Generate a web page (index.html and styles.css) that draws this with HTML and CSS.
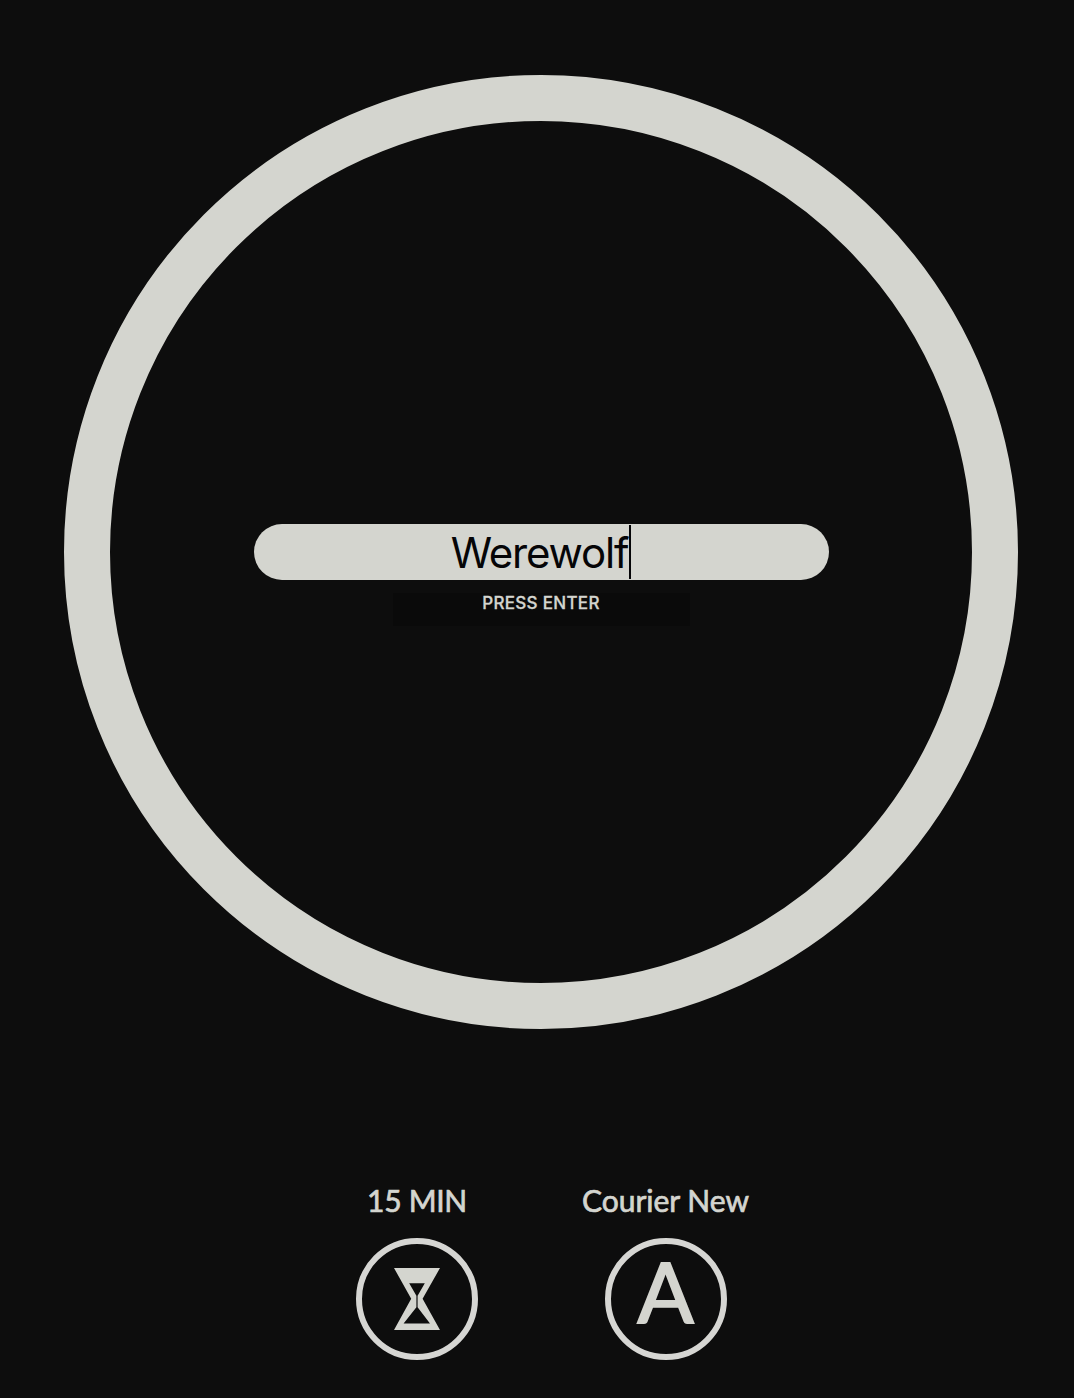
FILE: index.html
```html
<!DOCTYPE html>
<html lang="en">
<head>
<meta charset="utf-8">
<title>Werewolf</title>
<link rel="stylesheet" href="styles.css">
</head>
<body>
<main class="screen">
  <section class="ring">
    <div class="field"><span class="value">Werewolf</span><span class="caret"></span></div>
    <div class="hint"><span class="hint-text">PRESS ENTER</span></div>
  </section>
  <nav class="options">
    <div class="option">
      <span class="label label-time">15 MIN</span>
      <div class="button">
        <svg class="hourglass" width="46" height="62" viewBox="0 0 46 62" aria-hidden="true">
          <path fill="currentColor" fill-rule="evenodd" d="M0 0H46L28.6 30.8L46 62H0L17.2 30.8ZM15.2 15.3L22.4 27.8V39.2L9.6 55.6H36L23.6 39.2V27.8L30.8 15.3Z"/>
        </svg>
      </div>
    </div>
    <div class="option">
      <span class="label label-font">Courier New</span>
      <div class="button"><span class="letter">A</span></div>
    </div>
  </nav>
</main>
</body>
</html>
```

FILE: styles.css
```css
* { box-sizing: border-box; }
body {
  margin: 0;
  background: #0d0d0d;
  color: #d4d5cf;
}
.screen {
  width: 1074px;
  height: 1398px;
  padding: 75px 0 0 64px;
  overflow: hidden;
}
.ring {
  width: 954px;
  height: 954px;
  border: 46.5px solid #d4d5cf;
  border-radius: 50%;
  padding-top: 402.5px;
  display: flex;
  flex-direction: column;
  align-items: center;
}
.field {
  width: 575px;
  height: 56px;
  border-radius: 28px;
  background: #d4d5cf;
  color: #050507;
  display: flex;
  justify-content: center;
  align-items: center;
  font: 400 42px/56px Inter, sans-serif;
}
.value {
  padding-top: 2px;
  letter-spacing: -1.2px;
}
.caret {
  width: 2px;
  height: 54px;
  margin-left: 1px;
  background: #050507;
}
.hint {
  width: 297px;
  height: 33px;
  margin-top: 13px;
  background: #0a0a0a;
  text-align: center;
  font: 500 17px/21px Inter, sans-serif;
  letter-spacing: 0.3px;
  -webkit-text-stroke: 0.3px currentColor;
}
.options {
  display: flex;
  width: 498px;
  margin: 153px 0 0 228px;
}
.option {
  width: 249px;
  display: flex;
  flex-direction: column;
  align-items: center;
}
.label {
  font: 400 30px/36px Lato, sans-serif;
  white-space: nowrap;
  -webkit-text-stroke: 0.7px currentColor;
}
.label-time {
  letter-spacing: -0.3px;
  padding-left: 1px;
}
.button {
  width: 122px;
  height: 122px;
  margin-top: 20px;
  border: 6px solid #d6d6d3;
  border-radius: 50%;
  display: flex;
  align-items: center;
  justify-content: center;
}
.letter {
  font: 400 83px/110px Lato, sans-serif;
  padding-bottom: 17px;
  -webkit-text-stroke: 2px currentColor;
}
```
